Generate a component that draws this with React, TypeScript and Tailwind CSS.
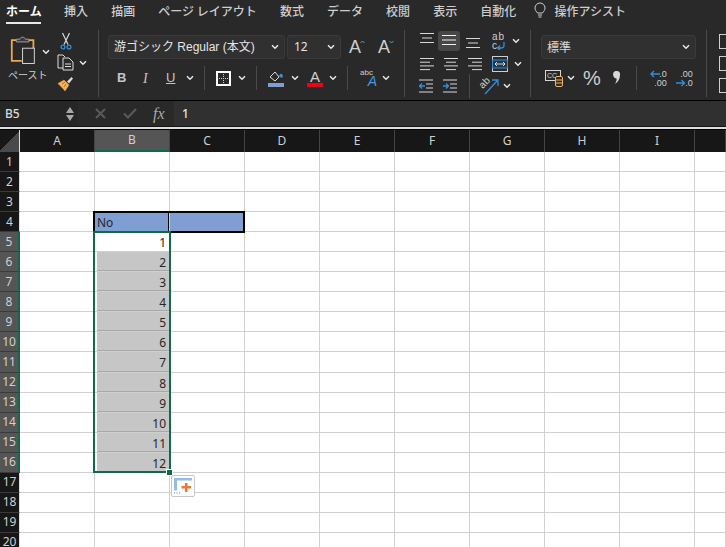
import type { ReactNode } from "react";

const tabs = ["挿入", "描画", "ページ レイアウト", "数式", "データ", "校閲", "表示", "自動化"];
const columns = ["A", "B", "C", "D", "E", "F", "G", "H", "I", ""];
const rows = Array.from({ length: 20 }, (_, i) => i + 1);

function Chevron({ className = "" }: { className?: string }) {
  return (
    <svg width="8" height="6" viewBox="0 0 8 6" className={`shrink-0 ${className}`}>
      <path d="M1 1.2 4 4.2 7 1.2" fill="none" stroke="#e8e8e8" strokeWidth="1.5" />
    </svg>
  );
}

function Sep({ className = "" }: { className?: string }) {
  return <div className={`w-px h-[24px] bg-[#4a4a4a] shrink-0 ${className}`} />;
}

function Lines({ widths, align = "left", highlight = false, className = "" }: { widths: number[]; align?: "left" | "center" | "right"; highlight?: boolean; className?: string }) {
  return (
    <svg width="16" height="14" viewBox="0 0 16 14" className={`shrink-0 ${className}`}>
      {widths.map((w, i) => {
        const x = align === "left" ? 1 : align === "right" ? 15 - w : 8 - w / 2;
        return <rect key={i} x={x} y={1 + i * (widths.length === 3 ? 4.5 : 3.7)} width={w} height="1" fill={highlight ? "#f2f2f2" : "#d8d8d8"} />;
      })}
    </svg>
  );
}

function PasteIcon() {
  return (
    <svg width="30" height="32" viewBox="0 0 30 32">
      <path d="M7 5H2v23h11" fill="none" stroke="#f0a648" strokeWidth="2" />
      <path d="M21 5h5v9" fill="none" stroke="#f0a648" strokeWidth="2" />
      <path d="M7 7V4h4c.5-3 5.500-3 6 0h4v3Z" fill="#3a3a3a" stroke="#aaa" strokeWidth="1" />
      <rect x="14" y="14" width="13" height="17" fill="#2b2b2b" stroke="#e4e4e4" strokeWidth="1" />
    </svg>
  );
}

function ScissorsIcon() {
  return (
    <svg width="12" height="18" viewBox="0 0 12 18">
      <path d="M2.500 1 8 12.500M9.500 1 4 12.500" stroke="#d8d8d8" strokeWidth="1.2" fill="none" />
      <circle cx="3" cy="15" r="1.900" fill="none" stroke="#2f8fdc" strokeWidth="1.3" />
      <circle cx="9" cy="15" r="1.900" fill="none" stroke="#2f8fdc" strokeWidth="1.3" />
    </svg>
  );
}

function CopyIcon() {
  return (
    <svg width="17" height="17" viewBox="0 0 17 17">
      <path d="M6 14H1V1h5l2 2" fill="none" stroke="#dcdcdc" strokeWidth="1" />
      <path d="M6 4h6l4 4v8H6Z" fill="#2b2b2b" stroke="#dcdcdc" strokeWidth="1" />
      <path d="M8 10h6M8 12.500h6" stroke="#dcdcdc" strokeWidth="1" />
    </svg>
  );
}

function BrushIcon() {
  return (
    <svg width="17" height="16" viewBox="0 0 17 16">
      <path d="M1 7.500 7 4l5 5-4 6C6 12 3 10 1 7.500Z" fill="#f2b45d" stroke="#e8953a" strokeWidth="0.6" />
      <path d="M8 6l-3 2M9 8l-2 3" stroke="#8a5b20" strokeWidth="0.8" />
      <path d="m10 5.500 4.500-4.500 1.500 1.500L12 7.500Z" fill="#d8d8d8" />
    </svg>
  );
}

function BorderIcon() {
  return (
    <svg width="15" height="15" viewBox="0 0 15 15">
      <rect x="1" y="1" width="13" height="13" fill="none" stroke="#ffffff" strokeWidth="2" />
      <path d="M7.500 3v9M3 7.500h9" stroke="#cfcfcf" strokeWidth="1" strokeDasharray="1 1" />
    </svg>
  );
}

function FillIcon() {
  return (
    <svg width="17" height="17" viewBox="0 0 17 17">
      <path d="m2 7 5-5 4 5-4 4Z" fill="none" stroke="#dcdcdc" strokeWidth="1" />
      <path d="M11 6c1-3 3-3 4 0l-1 2-2-1Z" fill="#3d8fd1" />
      <rect x="0" y="13" width="16" height="4" fill="#7f9fd3" />
    </svg>
  );
}

function FontColorIcon() {
  return (
    <div className="w-[16px] h-[17px] flex flex-col items-center shrink-0">
      <span className="text-[15px] leading-[13px] text-[#cfcfcf] font-['Liberation_Sans',sans-serif]">A</span>
      <div className="w-[16px] h-[4px] bg-[#f00014] mt-auto" />
    </div>
  );
}

function WrapIcon() {
  return (
    <div className="relative w-[16px] h-[18px] shrink-0 font-['Liberation_Sans',sans-serif] text-[#cfcfcf] text-[10px] leading-[9px]">
      <div className="pl-0.5 tracking-[1px]">ab</div>
      <div className="pl-0.5">c</div>
      <svg width="10" height="8" viewBox="0 0 10 8" className="absolute right-0 bottom-0">
        <path d="M8 0v3.500Q8 6 5 6H1.500M4 3.500 1.500 6 4 8" fill="none" stroke="#2f8fdc" strokeWidth="1.300" />
      </svg>
    </div>
  );
}

function MergeIcon() {
  return (
    <svg width="16" height="16" viewBox="0 0 16 16" className="shrink-0">
      <rect x="0.500" y="0.500" width="15" height="15" fill="none" stroke="#cfcfcf" />
      <rect x="0.500" y="4" width="15" height="8" fill="#20384c" stroke="#2f8fdc" />
      <path d="M3 8h10M5 6 3 8l2 2M11 6l2 2-2 2" fill="none" stroke="#e8e8e8" strokeWidth="0.9" />
    </svg>
  );
}

function IndentIcon({ reverse = false }: { reverse?: boolean }) {
  return (
    <svg width="14" height="14" viewBox="0 0 14 14" className="shrink-0">
      <path d="M0 1h14M7 5h7M7 9h7M0 13h14" stroke="#d8d8d8" strokeWidth="1" />
      {reverse ? (
        <path d="M0 7h6M3 4.500 0.500 7 3 9.500" fill="none" stroke="#2f8fdc" strokeWidth="1.300" />
      ) : (
        <path d="M0 7h5.500M3 4.500 5.500 7 3 9.500" fill="none" stroke="#2f8fdc" strokeWidth="1.300" />
      )}
    </svg>
  );
}

function OrientIcon() {
  return (
    <div className="relative w-[20px] h-[18px] shrink-0">
      <span className="absolute -left-px top-0 -rotate-45 text-[10px] leading-[12px] text-[#cfcfcf] font-['Liberation_Sans',sans-serif]">ab</span>
      <svg width="20" height="18" viewBox="0 0 20 18" className="absolute left-0 top-0">
        <path d="M5 17 17 4M12 3h6v6" fill="none" stroke="#2f8fdc" strokeWidth="1.300" />
      </svg>
    </div>
  );
}

function CurrencyIcon() {
  return (
    <div className="relative w-[17px] h-[17px] shrink-0">
      <div className="w-[16px] h-[11px] border border-[#d8d8d8] text-[7px] leading-[9px] text-[#d8d8d8] pl-px font-['Liberation_Sans',sans-serif]">CC</div>
      <svg width="8" height="11" viewBox="0 0 8 11" className="absolute right-[-1px] bottom-0">
        <rect x="0.500" y="0.500" width="7" height="10" rx="1.500" fill="#2b2b2b" stroke="#f0b45d" />
        <path d="M0.500 4h7M0.500 7h7" stroke="#f0b45d" />
      </svg>
    </div>
  );
}

function DecimalIcon({ more = false }: { more?: boolean }) {
  const cls = "absolute text-[9px] leading-[8px] text-[#cfcfcf] font-['Liberation_Sans',sans-serif]";
  return (
    <div className="relative w-[17px] h-[17px] shrink-0">
      <span className={`${cls} right-0 top-0`}>{more ? ".00" : ".0"}</span>
      <span className={`${cls} right-0 bottom-0`}>{more ? ".0" : ".00"}</span>
      <svg width="10" height="8" viewBox="0 0 10 8" className={more ? "absolute left-0 bottom-0" : "absolute left-0 top-0"}>
        {more ? <path d="M0 4h8M5.500 1 8.500 4l-3 3" fill="none" stroke="#2f8fdc" strokeWidth="1.300" /> : <path d="M10 4H1M4 1 1 4l3 3" fill="none" stroke="#2f8fdc" strokeWidth="1.300" />}
      </svg>
    </div>
  );
}

function Select({ className, children }: { className: string; children: ReactNode }) {
  return (
    <div className={`h-[24px] flex items-center justify-between rounded-[3px] bg-[#303030] border border-[#3a3a3a] shrink-0 ${className}`}>
      {children}
    </div>
  );
}

function GrowA({ down = false, className = "" }: { down?: boolean; className?: string }) {
  return (
    <div className={`flex items-start shrink-0 ${className}`}>
      <span className="text-[18px] leading-[18px] text-[#cfcfcf] font-['Liberation_Sans',sans-serif] font-light">A</span>
      <svg width="5" height="4" viewBox="0 0 5 4" className="mt-[2px] -ml-px">
        <path d={down ? "M0.500 1 2.500 3 4.500 1" : "M0.500 3 2.500 1 4.500 3"} fill="none" stroke="#4aa3e0" strokeWidth="1" />
      </svg>
    </div>
  );
}

function Ribbon() {
  return (
    <div className="h-[100px] bg-[#292929] overflow-hidden">
      <div className="h-[25px] flex items-start pt-[2px] pl-[6px] gap-[23.100px] text-[12px] leading-[17px] text-[#cdcdcd] font-medium">
        <div className="text-white font-bold h-[22px] border-b-[2px] border-[#e8e8e8] w-[35px] whitespace-nowrap">ホーム</div>
        {tabs.map((t) => (
          <span key={t} className="whitespace-nowrap">{t}</span>
        ))}
        <div className="flex items-center gap-[8px] -ml-[5px]">
          <svg width="12" height="17" viewBox="0 0 12 17">
            <path d="M3.500 11C2 9 1 8 1 6a5 5 0 0 1 10 0c0 2-1 3-2.500 5ZM4 13h4M4.500 15h3" fill="none" stroke="#d0d0d0" strokeWidth="1" />
          </svg>
          <span className="whitespace-nowrap">操作アシスト</span>
        </div>
      </div>

      <div className="flex h-[67px] mt-[5px]">
        <div className="w-[99px] shrink-0 border-r border-[#4a4a4a] flex pl-[10px] pr-[3px]">
          <div className="w-[40px] relative">
            <div className="flex items-end gap-[5px] pt-[4px]">
              <PasteIcon />
              <Chevron className="mb-[11px]" />
            </div>
            <div className="text-[10px] leading-[12px] text-[#cfcfcf] -ml-[2px] mt-[3px] whitespace-nowrap">ペースト</div>
          </div>
          <div className="flex flex-col gap-[4px] ml-[9px] pt-[2px]">
            <div className="ml-px"><ScissorsIcon /></div>
            <div className="flex items-center gap-[5px] -ml-[2px]">
              <CopyIcon />
              <Chevron />
            </div>
            <div className="-ml-[2px] mt-[1px]"><BrushIcon /></div>
          </div>
        </div>

        <div className="w-[306px] shrink-0 border-r border-[#4a4a4a] pl-[9px] pt-[5px]">
          <div className="flex items-center gap-[2px] text-[#e4e4e4] text-[12px]">
            <Select className="w-[177px] pl-[5px] pr-[5px]">
              <span className="whitespace-nowrap font-['Liberation_Sans','Noto_Sans_CJK_JP',sans-serif]">游ゴシック Regular (本文)</span>
              <Chevron />
            </Select>
            <Select className="w-[54px] pl-[6px] pr-[5px]">
              <span className="font-['Noto_Sans',sans-serif]">12</span>
              <Chevron />
            </Select>
            <GrowA className="ml-[6px]" />
            <GrowA down className="ml-[11px]" />
          </div>
          <div className="flex items-center mt-[10px] h-[18px] pl-[9px] text-[#c4c4c4] font-['Liberation_Sans',sans-serif] text-[13px]">
            <span className="font-bold w-[26px]">B</span>
            <span className="italic font-['Liberation_Serif',serif] w-[23px] text-[14px]">I</span>
            <span className="w-[20px] underline">U</span>
            <Chevron />
            <Sep className="ml-[10px]" />
            <div className="ml-[11px]"><BorderIcon /></div>
            <Chevron className="ml-[7px]" />
            <Sep className="ml-[10px]" />
            <div className="ml-[11px]"><FillIcon /></div>
            <Chevron className="ml-[6px]" />
            <div className="ml-[8px]"><FontColorIcon /></div>
            <Chevron className="ml-[6px]" />
            <Sep className="ml-[10px]" />
            <div className="flex flex-col w-[17px] h-[18px] ml-[12px]">
              <span className="text-[8px] leading-[7px] text-[#cfcfcf]">abc</span>
              <span className="italic text-[14px] leading-[11px] text-[#3d9be0] text-right">A</span>
            </div>
            <Chevron className="ml-[5px]" />
          </div>
        </div>

        <div className="w-[126px] shrink-0 border-r border-[#4a4a4a] pl-[14px] pt-[1px]">
          <div className="flex items-center h-[20px]">
            <Lines widths={[14, 10, 14]} align="center" className="-mt-[4px]" />
            <div className="w-[22px] h-[20px] rounded-[3px] bg-[#474747] ml-[3px] flex items-center justify-center"><Lines widths={[14, 14, 14]} highlight /></div>
            <Lines widths={[14, 10, 14]} align="center" className="ml-[5px] mt-[6px]" />
            <div className="ml-[9px]"><WrapIcon /></div>
            <Chevron className="ml-[6px]" />
          </div>
          <div className="flex items-center h-[20px] mt-[3px]">
            <Lines widths={[14, 10, 14, 10]} />
            <Lines widths={[14, 10, 14, 10]} align="center" className="ml-[8px]" />
            <Lines widths={[14, 10, 14, 10]} align="right" className="ml-[8px]" />
            <div className="ml-[9px]"><MergeIcon /></div>
            <Chevron className="ml-[6px]" />
          </div>
          <div className="flex items-center h-[20px] mt-[2px]">
            <IndentIcon reverse />
            <div className="ml-[10px]"><IndentIcon /></div>
            <Sep className="ml-[12px]" />
            <div className="ml-[10px]"><OrientIcon /></div>
            <Chevron className="ml-[3px]" />
          </div>
        </div>

        <div className="w-[176px] shrink-0 border-r border-[#4a4a4a] pl-[10px] pt-[5px]">
          <Select className="w-[155px] pl-[5px] pr-[5px] text-[12px] text-[#d8d8d8]">
            <span>標準</span>
            <Chevron />
          </Select>
          <div className="flex items-center mt-[10px] h-[18px] pl-[4px]">
            <CurrencyIcon />
            <Chevron className="ml-[5px]" />
            <span className="ml-[8px] text-[20px] leading-[18px] text-[#cfcfcf] font-['Liberation_Sans',sans-serif] font-light">%</span>
            <svg width="9" height="14" viewBox="0 0 9 14" className="ml-[11px] shrink-0">
              <path d="M1 3a3.500 3.500 0 1 1 7 1c0 4-2 7-5 9 1-2 2-4 1.500-5.500C3 7.500 1 6 1 3Z" fill="#d8d8d8" />
            </svg>
            <Sep className="ml-[15px]" />
            <div className="ml-[13px]"><DecimalIcon /></div>
            <div className="ml-[9px]"><DecimalIcon more /></div>
          </div>
        </div>

        <div className="flex-1 pl-[12px] flex flex-col gap-[7px] pt-[4px]">
          <div className="w-[16px] h-[15px] border border-[#d0d0d0] bg-[linear-gradient(90deg,transparent_40%,#d9434f_40%,#d9434f_70%,transparent_70%)]" />
          <div className="w-[16px] h-[15px] border border-[#d0d0d0]" />
          <div className="w-[16px] h-[15px] border border-[#d0d0d0] bg-[linear-gradient(90deg,transparent_40%,#2f8fdc_40%,#2f8fdc_70%,transparent_70%)]" />
        </div>
      </div>
    </div>
  );
}

function FormulaBar() {
  return (
    <div className="h-[26px] mt-px bg-[#292929] flex items-stretch border-b border-[#151515]">
      <div className="w-[78px] bg-[#262626] flex items-center justify-between pl-[5px] pr-[4px] text-[12px] font-medium text-[#d8d8d8]">
        <span className="font-['Noto_Sans',sans-serif]">B5</span>
        <div className="flex flex-col gap-[2px]">
          <div className="w-0 h-0 border-x-[4px] border-x-transparent border-b-[6px] border-b-[#a8a8a8]" />
          <div className="w-0 h-0 border-x-[4px] border-x-transparent border-t-[6px] border-t-[#a8a8a8]" />
        </div>
      </div>
      <div className="w-[96px] flex items-center pl-[17px]">
        <svg width="11" height="11" viewBox="0 0 11 11">
          <path d="M1 1l9 9M10 1l-9 9" stroke="#5a5a5a" strokeWidth="2" />
        </svg>
        <svg width="14" height="11" viewBox="0 0 14 11" className="ml-[17px]">
          <path d="M1 5.500 5 9.500 13 1" fill="none" stroke="#5a5a5a" strokeWidth="2" />
        </svg>
        <span className="ml-[16px] italic text-[16px] text-[#a8a8a8] font-['Liberation_Serif',serif]">fx</span>
      </div>
      <div className="flex-1 bg-[#303030] flex items-center pl-[8px] text-[12px] font-medium text-[#e4e4e4] font-['Noto_Sans',sans-serif]">1</div>
    </div>
  );
}

function Cell({ col, row }: { col: string; row: number }) {
  const inData = col === "B" && row >= 5 && row <= 16;
  const shaded = col === "B" && row >= 6 && row <= 16;
  const isHead = row === 4 && (col === "B" || col === "C");
  return (
    <div
      className={`h-full border-r border-b border-[#d0d0d0] text-[12px] leading-[21px] text-[#262626] overflow-hidden ${
        col === "" ? "flex-1" : "w-[75px] shrink-0"
      } ${isHead ? "bg-[#7f9fd3]" : "bg-white"}`}
    >
      {isHead && col === "B" && <div className="pl-[2px]">No</div>}
      {inData && (
        <div className={`h-full text-right pr-[3px] ml-[2px] ${shaded ? "bg-[#c6c6c6] border-b border-[#a8a8a8]" : ""}`}>{row - 4}</div>
      )}
    </div>
  );
}

function Sheet() {
  return (
    <div className="relative flex-1 bg-white font-['Noto_Sans',sans-serif] overflow-hidden">
      <div className="flex h-[22px] bg-[#171717] text-[12px] text-[#d0d0d0]">
        <div className="w-[20px] shrink-0 border-r border-[#e0e0e0] bg-[linear-gradient(135deg,#171717_50%,#4a4a4a_50%)]" />
        {columns.map((c) => (
          <div
            key={c}
            className={`flex items-center justify-center border-r border-[#444] ${c === "" ? "flex-1" : "w-[75px] shrink-0"} ${
              c === "B" ? "bg-[#555555] border-b-[2px] border-b-[#0f6b45]" : ""
            }`}
          >
            {c}
          </div>
        ))}
      </div>
      {rows.map((r) => (
        <div key={r} className="flex h-[20.06px]">
          <div
            className={`w-[20px] shrink-0 flex items-center justify-center text-[12px] text-[#d0d0d0] border-b border-[#3a3a3a] border-r ${
              r >= 5 && r <= 16 ? "bg-[#555555] border-r-[2px] border-r-[#0f6b45]" : "bg-[#171717] border-r-[#e0e0e0]"
            }`}
          >
            {r}
          </div>
          {columns.map((c) => (
            <Cell key={c} col={c} row={r} />
          ))}
        </div>
      ))}

      {/* header outline, selection, fill handle, paste options */}
      <div className="absolute left-[93px] top-[81px] w-[152px] h-[22px] border-2 border-black pointer-events-none">
        <div className="ml-[73px] w-px h-full bg-black" />
      </div>
      <div className="absolute left-[93px] top-[101px] w-[78px] h-[242px] border-2 border-[#0f6b45] pointer-events-none" />
      <div className="absolute left-[166px] top-[339px] w-[7px] h-[7px] bg-[#0f6b45] border border-white" />
      <div className="absolute left-[171px] top-[345px] w-[24px] h-[22px] bg-white border border-[#c8c8c8] rounded-[2px] flex items-center justify-center">
        <svg width="20" height="18" viewBox="0 0 20 18">
          <path d="M1 1h18v2.500H4v10H1Z" fill="#93bde6" />
          <path d="M12 6h2.500v3H18v2.500h-3.500V15H12v-3.500H8.500V9H12Z" fill="#ee7b33" />
          <path d="M1 16h1M3.500 16h1M6 16h1" stroke="#777" />
        </svg>
      </div>
    </div>
  );
}

export default function App() {
  return (
    <div className="w-[726px] h-[547px] overflow-hidden bg-black flex flex-col font-['Noto_Sans_CJK_JP','Noto_Sans',sans-serif]">
      <Ribbon />
      <FormulaBar />
      <div className="h-[2px] bg-[#dddddd] shrink-0" />
      <div className="h-px bg-black shrink-0" />
      <Sheet />
    </div>
  );
}
